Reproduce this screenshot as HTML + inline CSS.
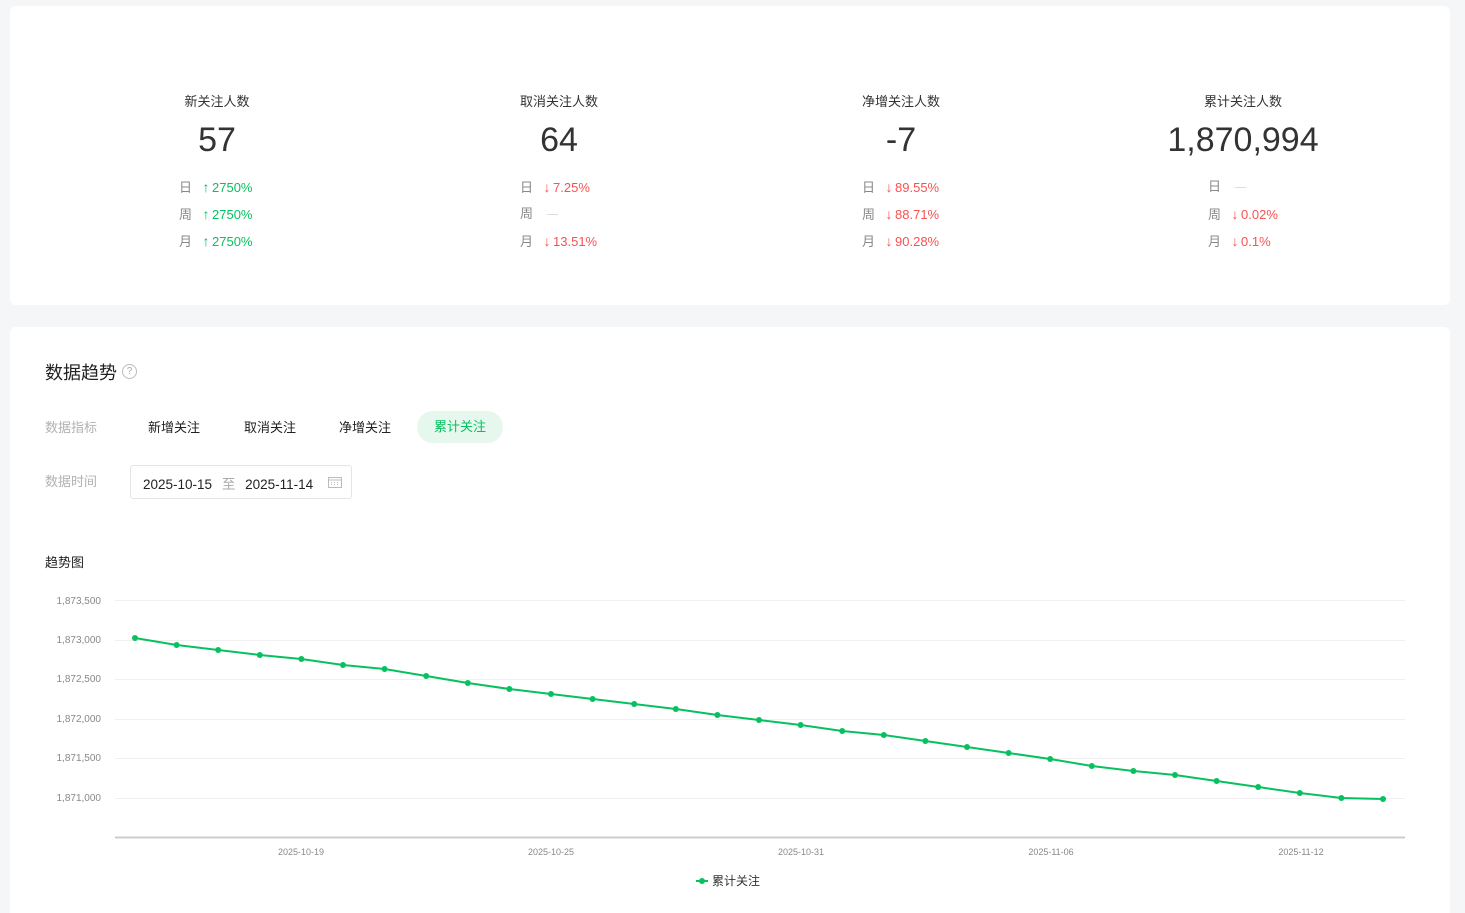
<!DOCTYPE html>
<html><head><meta charset="utf-8"><style>
*{margin:0;padding:0;box-sizing:border-box}
html,body{width:1465px;height:913px;overflow:hidden}
body{background:#f5f6f7;font-family:"Liberation Sans","Noto Sans CJK SC",sans-serif;color:#333;position:relative}
.card{position:absolute;background:#fff;border-radius:6px}
.abs{position:absolute;white-space:nowrap}
.t{font-size:13px;color:#333;transform:translateX(-50%)}
.n{font-size:34px;color:#333;transform:translateX(-50%);line-height:40px}
.r{font-size:13px;color:#888;line-height:16px}
.r span{margin-left:8px}
.r b{font-weight:normal;display:inline-block;width:12px;text-align:center;font-size:14px}
.g{color:#07c160}.red{color:#fa5151}
.dash{display:inline-block;width:11px;height:1px;background:#ddd;vertical-align:middle;margin-left:14px}
</style></head><body>
<div class="card" style="left:10px;top:6px;width:1440px;height:299px"></div>
<div class="card" style="left:10px;top:327px;width:1440px;height:600px"></div>

<div class="abs t" style="left:217px;top:91px">新关注人数</div>
<div class="abs n" style="left:217px;top:120px">57</div>
<div class="abs r" style="left:179px;top:179px">日<span class="g"><b>↑</b>2750%</span></div>
<div class="abs r" style="left:179px;top:206px">周<span class="g"><b>↑</b>2750%</span></div>
<div class="abs r" style="left:179px;top:233px">月<span class="g"><b>↑</b>2750%</span></div>

<div class="abs t" style="left:559px;top:91px">取消关注人数</div>
<div class="abs n" style="left:559px;top:120px">64</div>
<div class="abs r" style="left:520px;top:179px">日<span class="red"><b>↓</b>7.25%</span></div>
<div class="abs r" style="left:520px;top:206px">周<i class="dash"></i></div>
<div class="abs r" style="left:520px;top:233px">月<span class="red"><b>↓</b>13.51%</span></div>

<div class="abs t" style="left:901px;top:91px">净增关注人数</div>
<div class="abs n" style="left:901px;top:120px">-7</div>
<div class="abs r" style="left:862px;top:179px">日<span class="red"><b>↓</b>89.55%</span></div>
<div class="abs r" style="left:862px;top:206px">周<span class="red"><b>↓</b>88.71%</span></div>
<div class="abs r" style="left:862px;top:233px">月<span class="red"><b>↓</b>90.28%</span></div>

<div class="abs t" style="left:1243px;top:91px">累计关注人数</div>
<div class="abs n" style="left:1243px;top:120px">1,870,994</div>
<div class="abs r" style="left:1208px;top:179px">日<i class="dash"></i></div>
<div class="abs r" style="left:1208px;top:206px">周<span class="red"><b>↓</b>0.02%</span></div>
<div class="abs r" style="left:1208px;top:233px">月<span class="red"><b>↓</b>0.1%</span></div>

<div class="abs" style="left:45px;top:359px;font-size:18px;color:#222">数据趋势</div>
<div class="abs" style="left:122px;top:364px;width:15px;height:15px;border:1px solid #bbb;border-radius:50%;font-size:10px;color:#aaa;text-align:center;line-height:13px">?</div>

<div class="abs" style="left:45px;top:417px;font-size:13px;color:#b2b2b2">数据指标</div>
<div class="abs" style="left:148px;top:417px;font-size:13px;color:#222">新增关注</div>
<div class="abs" style="left:244px;top:417px;font-size:13px;color:#222">取消关注</div>
<div class="abs" style="left:339px;top:417px;font-size:13px;color:#222">净增关注</div>
<div class="abs" style="left:417px;top:411px;width:86px;height:32px;border-radius:16px;background:#e6f8ee;color:#07c160;font-size:13px;text-align:center;line-height:32px">累计关注</div>

<div class="abs" style="left:45px;top:471px;font-size:13px;color:#b2b2b2">数据时间</div>
<div class="abs" style="left:130px;top:465px;width:222px;height:34px;border:1px solid #e5e5e5;border-radius:3px"></div>
<div class="abs" style="left:143px;top:473px;font-size:13.5px;color:#222">2025-10-15 <span style="color:#aaa;margin:0 6px">至</span> 2025-11-14</div>
<svg class="abs" style="left:328px;top:476px" width="14" height="12"><rect x="0.5" y="1.5" width="13" height="10" fill="none" stroke="#bbb"/><line x1="0" y1="4" x2="14" y2="4" stroke="#bbb"/><g fill="#bbb"><rect x="3" y="6" width="1" height="1"/><rect x="6" y="6" width="1" height="1"/><rect x="9" y="6" width="1" height="1"/><rect x="3" y="8" width="1" height="1"/><rect x="6" y="8" width="1" height="1"/><rect x="9" y="8" width="1" height="1"/></g></svg>

<div class="abs" style="left:45px;top:552px;font-size:13px;color:#222">趋势图</div>

<svg class="abs" style="left:0;top:0" width="1465" height="913">
<g stroke="#f0f0f0" stroke-width="1">
<line x1="115" y1="600.5" x2="1405" y2="600.5"/><line x1="115" y1="640.5" x2="1405" y2="640.5"/><line x1="115" y1="679.5" x2="1405" y2="679.5"/><line x1="115" y1="719.5" x2="1405" y2="719.5"/><line x1="115" y1="758.5" x2="1405" y2="758.5"/><line x1="115" y1="798.5" x2="1405" y2="798.5"/>
</g>
<line x1="115" y1="837.5" x2="1405" y2="837.5" stroke="#ccc" stroke-width="2"/>
<g font-family="Liberation Sans,sans-serif" font-size="10" fill="#888" text-anchor="end">
<text x="101" y="604">1,873,500</text><text x="101" y="643">1,873,000</text><text x="101" y="682">1,872,500</text><text x="101" y="722">1,872,000</text><text x="101" y="761">1,871,500</text><text x="101" y="801">1,871,000</text>
</g>
<g font-family="Liberation Sans,sans-serif" font-size="9" fill="#888" text-anchor="middle">
<text x="301" y="855">2025-10-19</text><text x="551" y="855">2025-10-25</text><text x="801" y="855">2025-10-31</text><text x="1051" y="855">2025-11-06</text><text x="1301" y="855">2025-11-12</text>
</g>
<polyline fill="none" stroke="#07c160" stroke-width="2" points="135,638 176.6,645 218.2,650 259.8,655 301.4,659 343,665 384.6,669 426.2,676 467.8,683 509.4,689 551,694 592.6,699 634.2,704 675.8,709 717.4,715 759,720 800.6,725 842.2,731 883.8,735 925.4,741 967,747 1008.6,753 1050.2,759 1091.8,766 1133.4,771 1175,775 1216.6,781 1258.2,787 1299.8,793 1341.4,798 1383,799"/>
<g fill="#07c160">
<circle cx="135" cy="638" r="3"/><circle cx="176.6" cy="645" r="3"/><circle cx="218.2" cy="650" r="3"/><circle cx="259.8" cy="655" r="3"/><circle cx="301.4" cy="659" r="3"/><circle cx="343" cy="665" r="3"/><circle cx="384.6" cy="669" r="3"/><circle cx="426.2" cy="676" r="3"/><circle cx="467.8" cy="683" r="3"/><circle cx="509.4" cy="689" r="3"/><circle cx="551" cy="694" r="3"/><circle cx="592.6" cy="699" r="3"/><circle cx="634.2" cy="704" r="3"/><circle cx="675.8" cy="709" r="3"/><circle cx="717.4" cy="715" r="3"/><circle cx="759" cy="720" r="3"/><circle cx="800.6" cy="725" r="3"/><circle cx="842.2" cy="731" r="3"/><circle cx="883.8" cy="735" r="3"/><circle cx="925.4" cy="741" r="3"/><circle cx="967" cy="747" r="3"/><circle cx="1008.6" cy="753" r="3"/><circle cx="1050.2" cy="759" r="3"/><circle cx="1091.8" cy="766" r="3"/><circle cx="1133.4" cy="771" r="3"/><circle cx="1175" cy="775" r="3"/><circle cx="1216.6" cy="781" r="3"/><circle cx="1258.2" cy="787" r="3"/><circle cx="1299.8" cy="793" r="3"/><circle cx="1341.4" cy="798" r="3"/><circle cx="1383" cy="799" r="3"/>
</g>
<line x1="696" y1="881" x2="708" y2="881" stroke="#07c160" stroke-width="2"/>
<circle cx="702" cy="881" r="3" fill="#07c160"/>
<text x="712" y="885" font-family="Liberation Sans,Noto Sans CJK SC,sans-serif" font-size="12" fill="#333">累计关注</text>
</svg>
</body></html>
